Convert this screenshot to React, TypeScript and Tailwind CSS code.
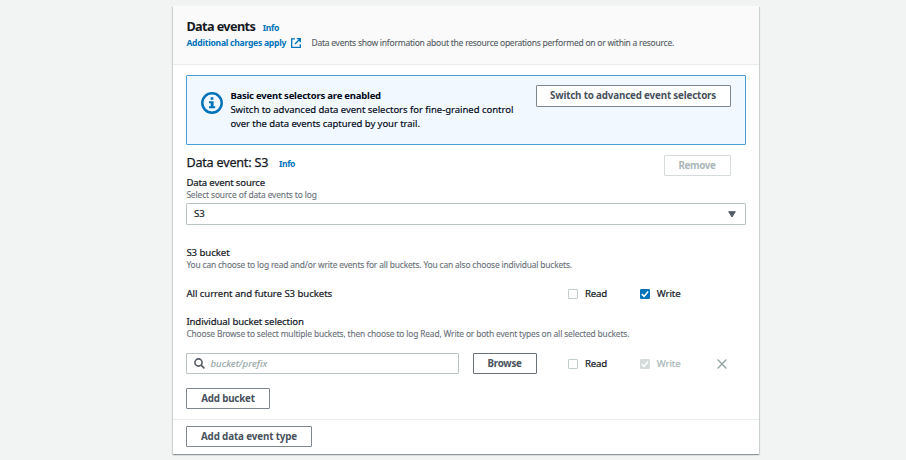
import type { ReactNode } from "react";

function InfoLink({ className = "" }: { className?: string }) {
  return (
    <a className={`text-[8.6px] font-bold leading-[12px] tracking-[-0.38px] text-[#0073bb] ${className}`}>Info</a>
  );
}

function Button({ children, className = "" }: { children: ReactNode; className?: string }) {
  return (
    <button
      className={`flex shrink-0 items-center justify-center whitespace-nowrap rounded-[1px] border bg-white text-[9.8px] font-bold leading-[14px] ${className}`}
    >
      {children}
    </button>
  );
}

function Check({ label, checked, disabled }: { label: string; checked?: boolean; disabled?: boolean }) {
  const fill = disabled ? "border-[#d5dbdb] bg-[#d5dbdb]" : "border-[#0073bb] bg-[#0073bb]";
  return (
    <label className="flex h-[14px] w-[71.8px] shrink-0 items-center">
      <span
        className={`flex size-[10px] items-center justify-center rounded-[1px] border ${checked ? fill : "border-[#c3cccc] bg-white"}`}
      >
        {checked && (
          <svg viewBox="0 0 10 10" className="size-[10px] shrink-0" fill="none" stroke="#fff" strokeWidth="1.5">
            <path d="M1.8 5.1 4.1 7.4 8.1 2.5" />
          </svg>
        )}
      </span>
      <span
        className={`ml-[7px] text-[9.7px] leading-[14px] [-webkit-text-stroke:0.2px] ${label === "Read" ? "tracking-[-0.25px]" : "tracking-[-0.13px]"} ${disabled ? "text-[#aab7b8]" : "text-[#16191f]"}`}
      >
        {label}
      </span>
    </label>
  );
}

export default function App() {
  return (
    <div className="h-[460px] w-[906px] overflow-hidden whitespace-nowrap bg-[#f2f3f3] pl-[173px] pt-[6px] font-['Noto_Sans','Open_Sans',sans-serif] text-[#16191f]">
      <div className="flex h-[448px] w-[586px] flex-col bg-white shadow-[0_1px_1px_0_rgba(0,28,36,0.25),1px_1px_1px_0_rgba(0,28,36,0.12),-1px_1px_1px_0_rgba(0,28,36,0.12)]">
        <header className="h-[59px] shrink-0 border-b border-[#eaeded] bg-[#fafafa] pl-[13.4px] pt-[11px]">
          <div className="flex h-[18px] items-baseline">
            <h2 className="text-[12.7px] font-bold leading-[18px] tracking-[-0.61px]">Data events</h2>
            <InfoLink className="ml-[7.6px]" />
          </div>
          <div className="mt-[2px] flex h-[12px] items-center">
            <a className="text-[8.6px] font-bold leading-[12px] tracking-[-0.265px] text-[#0073bb]">
              Additional charges apply
            </a>
            <svg viewBox="0 0 10 10" className="ml-[4.8px] size-[10px]" fill="none" stroke="#0073bb" strokeWidth="1.3">
              <path d="M4 .8H.7v8.6h8.6V6.2M5.8.7h3.5v3.5M9.2.8 4 6" />
            </svg>
            <span className="ml-[10.5px] text-[8.5px] leading-[12px] tracking-[-0.242px] text-[#545b64] [-webkit-text-stroke:0.1px]">
              Data events show information about the resource operations performed on or within a resource.
            </span>
          </div>
        </header>

        <main className="flex flex-col pl-[13.4px] pr-[13.4px]">
          <section className="mt-[10px] flex h-[70px] items-start rounded-[1px] border border-[#4b9fd5] bg-[#f1f8ff] pl-[13.8px] pr-[13.6px]">
            <svg viewBox="0 0 22 22" className="mt-[16px] size-[22px] shrink-0">
              <circle cx="11" cy="11" r="9.7" fill="none" stroke="#0073bb" strokeWidth="2.5" />
              <path
                d="M9.6 5.2h2.8v2.6H9.6zM8 9.2h4.6v5H14.2v2.1H8v-2.1h1.7v-2.9H8z"
                fill="#0073bb"
              />
            </svg>
            <div className="ml-[7.2px] mt-[13px] flex-1 text-[9.5px] leading-[14px] text-[#000716]">
              <p className="font-bold tracking-[-0.217px]">Basic event selectors are enabled</p>
              <p className="tracking-[-0.021px] [-webkit-text-stroke:0.15px]">
                Switch to advanced data event selectors for fine-grained control
              </p>
              <p className="tracking-[-0.046px] [-webkit-text-stroke:0.15px]">
                over the data events captured by your trail.
              </p>
            </div>
            <Button className="mt-[9px] h-[22px] w-[195px] border-[#7d8791] pr-px tracking-[-0.17px] text-[#48515c]">
              Switch to advanced event selectors
            </Button>
          </section>

          <div className="mt-[9px] flex h-[22px] items-start justify-between pr-[14.6px]">
            <div className="flex items-baseline">
              <h3 className="text-[12.6px] leading-[18px] tracking-[-0.2px] [-webkit-text-stroke:0.25px]">
                Data event: S3
              </h3>
              <InfoLink className="ml-[10.8px]" />
            </div>
            <Button className="mt-px h-[21px] w-[67px] border-[#d5dbdb] pr-px tracking-[-0.33px] text-[#aab7b8]">
              Remove
            </Button>
          </div>
          <h4 className="text-[9.6px] leading-[14px] tracking-[-0.15px] [-webkit-text-stroke:0.2px]">
            Data event source
          </h4>
          <p className="-mt-px text-[8.4px] leading-[12px] tracking-[-0.115px] text-[#687078] [-webkit-text-stroke:0.1px]">
            Select source of data events to log
          </p>
          <div className="mt-[2px] flex h-[22px] items-center justify-between rounded-[1px] border border-[#b9c4c5] pl-[6.5px] pr-[8.6px]">
            <span className="text-[9.6px] leading-[14px] [-webkit-text-stroke:0.2px]">S3</span>
            <svg viewBox="0 0 8 7" className="h-[7px] w-[8px]">
              <path d="M.7.7h6.6L4 6z" fill="#545b64" stroke="#545b64" strokeLinejoin="round" />
            </svg>
          </div>

          <h4 className="mt-[21px] text-[9.6px] leading-[14px] tracking-[-0.06px] [-webkit-text-stroke:0.2px]">
            S3 bucket
          </h4>
          <p className="-mt-px text-[8.4px] leading-[12px] tracking-[-0.15px] text-[#687078] [-webkit-text-stroke:0.1px]">
            You can choose to log read and/or write events for all buckets. You can also choose individual buckets.
          </p>
          <div className="mt-[16px] flex h-[14px] items-center">
            <span className="w-[381.6px] text-[9.6px] leading-[14px] tracking-[-0.05px] [-webkit-text-stroke:0.2px]">
              All current and future S3 buckets
            </span>
            <Check label="Read" />
            <Check label="Write" checked />
          </div>

          <h4 className="mt-[14px] text-[9.6px] leading-[14px] tracking-[-0.1px] [-webkit-text-stroke:0.2px]">
            Individual bucket selection
          </h4>
          <p className="-mt-px text-[8.4px] leading-[12px] tracking-[-0.145px] text-[#687078] [-webkit-text-stroke:0.1px]">
            Choose Browse to select multiple buckets, then choose to log Read, Write or both event types on all selected
            buckets.
          </p>
          <div className="mt-[13px] flex h-[21px] items-center">
            <div className="flex h-[21px] w-[272.6px] items-center rounded-[1px] border border-[#b9c4c5] pl-[7px]">
              <svg viewBox="0 0 11 11" className="size-[11px]" fill="none" stroke="#545b64" strokeWidth="1.6">
                <circle cx="4.5" cy="4.5" r="3.6" />
                <path d="m7.1 7.1 3.3 3.3" />
              </svg>
              <span className="ml-[5px] text-[9.7px] italic leading-[14px] tracking-[0.06px] text-[#95a5a6] [-webkit-text-stroke:0.1px]">
                bucket/prefix
              </span>
            </div>
            <Button className="ml-[13.6px] mr-[31.4px] h-[21px] w-[64px] border-[#687078] tracking-[-0.3px] text-[#48515c]">
              Browse
            </Button>
            <Check label="Read" />
            <Check label="Write" checked disabled />
            <svg viewBox="0 0 10 10" className="ml-[5.4px] size-[10px]" fill="none" stroke="#95a5a6" strokeWidth="1.4">
              <path d="m.6.6 8.8 8.8M9.4.6.6 9.4" />
            </svg>
          </div>
          <Button className="mt-[14px] h-[21px] w-[83.2px] border-[#7d8791] tracking-[-0.2px] text-[#48515c]">
            Add bucket
          </Button>
        </main>

        <footer className="mt-[10px] border-t border-[#eaeded] pl-[13.4px] pt-[6px]">
          <Button className="h-[21px] w-[125.2px] border-[#7d8791] tracking-[-0.13px] text-[#48515c]">
            Add data event type
          </Button>
        </footer>
      </div>
    </div>
  );
}
